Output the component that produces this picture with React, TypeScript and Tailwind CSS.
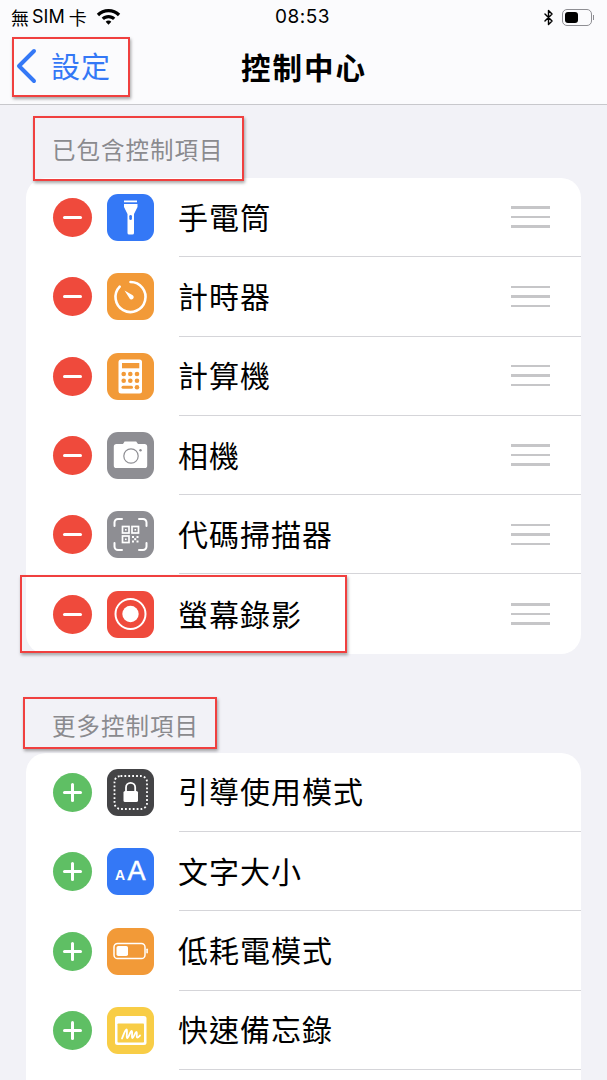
import { Bluetooth } from "lucide-react";
import type { ReactNode } from "react";

const cjk = "font-['Noto_Sans_CJK_TC','Noto_Sans_CJK_SC',sans-serif]";

function Tile({ color, children }: { color: string; children: ReactNode }) {
  return (
    <div className={`w-[47px] h-[47px] rounded-[11px] shrink-0 ${color}`}>
      <svg width="47" height="47" viewBox="0 0 47 47">
        {children}
      </svg>
    </div>
  );
}

const Flashlight = (
  <Tile color="bg-[#3478f6]">
    <rect x="17" y="6.5" width="13" height="1.8" fill="#fff" />
    <path d="M17 10h13.5v3l-3.5 7v19a1.6 1.6 0 0 1-1.6 1.6h-3.3a1.6 1.6 0 0 1-1.6-1.6V20l-3.5-7z" fill="#fff" />
    <rect x="22.3" y="21" width="2.6" height="5" rx="1.3" fill="#3478f6" />
  </Tile>
);

const Timer = (
  <Tile color="bg-[#f29a38]">
    <path d="M23.5 9a15 15 0 1 1-10.800 4.600" fill="none" stroke="#fff" strokeWidth="2.6" strokeLinecap="round" />
    <path d="M17.500 17.500l7.800 4.600a2.300 2.300 0 1 1-3 3z" fill="#fff" />
  </Tile>
);

const calcKeys = [
  [16.7, 21],
  [23.3, 21],
  [30, 21],
  [16.7, 27.7],
  [23.3, 27.7],
  [30, 27.7],
  [30, 34.3],
];

const Calculator = (
  <Tile color="bg-[#f29a38]">
    <rect x="11.5" y="6.5" width="23.5" height="34" rx="2.5" fill="#fff" />
    <rect x="15" y="10" width="17.300" height="5.300" fill="#f29a38" />
    {calcKeys.map(([cx, cy]) => (
      <circle key={`${cx}-${cy}`} cx={cx} cy={cy} r="2.3" fill="#f29a38" />
    ))}
    <rect x="14.500" y="32.800" width="11.500" height="3" rx="1.5" fill="#f29a38" />
  </Tile>
);

const Camera = (
  <Tile color="bg-[#8e8e93]">
    <path d="M9.5 12h6.5l1.6-2.6h11.6L31 12h6.5A2.7 2.7 0 0 1 40.2 14.7v18.7a2.7 2.7 0 0 1-2.7 2.7h-28a2.7 2.7 0 0 1-2.7-2.7V14.7A2.7 2.7 0 0 1 9.5 12z" fill="#fff" />
    <circle cx="24" cy="24" r="7.2" fill="none" stroke="#8e8e93" strokeWidth="1.2" />
    <circle cx="33.5" cy="18.3" r="1.2" fill="#8e8e93" />
  </Tile>
);

const QrScan = (
  <Tile color="bg-[#8e8e93]">
    <path d="M7.5 15v-3.5a3.5 3.5 0 0 1 3.5-3.5h4M32 8h4a3.5 3.5 0 0 1 3.5 3.5V15M39.5 32v3.5a3.5 3.5 0 0 1-3.5 3.5h-4M15 39h-4a3.5 3.5 0 0 1-3.5-3.5V32" fill="none" stroke="#fff" strokeWidth="2" strokeLinecap="round" />
    <g fill="none" stroke="#fff" strokeWidth="1.7">
      <rect x="15.5" y="15.5" width="6.5" height="6.5" />
      <rect x="25" y="15.5" width="6.5" height="6.5" />
      <rect x="15.5" y="25" width="6.5" height="6.5" />
    </g>
    <g fill="#fff">
      <rect x="18" y="18" width="1.6" height="1.6" />
      <rect x="27.5" y="18" width="1.6" height="1.6" />
      <rect x="18" y="27.5" width="1.6" height="1.6" />
      <rect x="25" y="25" width="2" height="2" />
      <rect x="29.5" y="25" width="2" height="2" />
      <rect x="27.2" y="27.2" width="2" height="2" />
      <rect x="25" y="29.5" width="2" height="2" />
      <rect x="29.5" y="29.5" width="2" height="2" />
    </g>
  </Tile>
);

const Record = (
  <Tile color="bg-[#ef4a3c]">
    <circle cx="23.5" cy="23" r="15" fill="none" stroke="#fff" strokeWidth="2" />
    <circle cx="23.5" cy="23" r="8.2" fill="#fff" />
  </Tile>
);

const GuidedAccess = (
  <Tile color="bg-[#444446]">
    <rect x="7.5" y="7" width="32.5" height="33" rx="6" fill="none" stroke="#fff" strokeWidth="1.8" strokeDasharray="1.8 2.1" />
    <path d="M19 22v-3.5a4.6 4.6 0 0 1 9.2 0V22" fill="none" stroke="#fff" strokeWidth="1.8" />
    <rect x="16.5" y="22" width="14.5" height="11" rx="1.6" fill="#fff" />
  </Tile>
);

const TextSize = (
  <Tile color="bg-[#3478f6]">
    <text x="8" y="32" fill="#fff" fontSize="14" fontWeight="700" fontFamily="Liberation Sans, sans-serif">A</text>
    <text x="20.500" y="32" fill="#fff" fontSize="27" fontWeight="400" stroke="#fff" strokeWidth="0.5" fontFamily="Liberation Sans, sans-serif">A</text>
  </Tile>
);

const LowPower = (
  <Tile color="bg-[#f29a38]">
    <rect x="7" y="15.5" width="31" height="15" rx="3.6" fill="none" stroke="#fff" strokeWidth="1.5" />
    <rect x="9.5" y="18" width="11.5" height="10" rx="1.8" fill="#fff" />
    <rect x="39.3" y="20.5" width="1.6" height="5" rx="0.8" fill="#fff" />
  </Tile>
);

const QuickNote = (
  <Tile color="bg-[#f8cd46]">
    <rect x="8" y="9" width="31.5" height="29" rx="2.5" fill="#fff" />
    <rect x="10.5" y="16.5" width="26.5" height="19" rx="0.8" fill="#f8cd46" />
    <path d="M15 31.500c1.500-3.500 3.200-9 4.500-9s-.6 8.500.8 8.500 3-7 4.300-7-.4 7 .9 7 2.500-6 3.800-6-.3 5.500 1 5.500 1.700-1 2.700-2" fill="none" stroke="#fff" strokeWidth="1.8" strokeLinecap="round" strokeLinejoin="round" />
  </Tile>
);

function Round({ add }: { add?: boolean }) {
  return (
    <div className={`relative w-[39px] h-[39px] rounded-full shrink-0 ${add ? "bg-[#5fbf64]" : "bg-[#ef4a3c]"}`}>
      <div className="absolute left-[10px] top-[18px] w-[19px] h-[3px] rounded-full bg-white" />
      {add && <div className="absolute left-[18px] top-[10px] w-[3px] h-[19px] rounded-full bg-white" />}
    </div>
  );
}

function Row({ icon, label, add, last }: { icon: ReactNode; label: string; add?: boolean; last?: boolean }) {
  return (
    <div className="h-[79.3px] flex items-center pl-[27px]">
      <Round add={add} />
      <div className="ml-[15px]">{icon}</div>
      <div className={`ml-[25px] flex-1 h-full flex items-center ${last ? "" : "border-b border-[#d5d5d9]"}`}>
        <span className={`${cjk} text-[30px] tracking-[1px] -ml-[1px] text-black leading-none mb-[3px]`}>{label}</span>
        {!add && (
          <div className="ml-auto mr-[31px] w-[39px] flex flex-col gap-[7px]">
            <div className="h-[2.5px] bg-[#c6c6c8]" />
            <div className="h-[2.5px] bg-[#c6c6c8]" />
            <div className="h-[2.5px] bg-[#c6c6c8]" />
          </div>
        )}
      </div>
    </div>
  );
}

function Mark({ className }: { className: string }) {
  return <div className={`absolute border-2 border-[#f0403f] shadow-[1px_2px_3px_rgba(0,0,0,0.35)] ${className}`} />;
}

export default function App() {
  return (
    <div className={`relative h-[1080px] overflow-hidden bg-[#f2f2f7] ${cjk}`}>
      {/* status bar + nav */}
      <div className="bg-[#fbfbfd] border-b border-[#c8c8cc] h-[105px]">
        <div className="h-[34px] flex items-center pl-[11px] pr-[13px] text-black">
          <span className="text-[18px] leading-none">無</span>
          <span className="text-[18px] leading-none ml-[3px] font-['Inter',sans-serif]">SIM</span>
          <span className="text-[18px] leading-none ml-[4px]">卡</span>
          <svg className="ml-[9px]" width="25" height="18" viewBox="0 0 25 18">
            <path d="M12.500 1C8 1 3.800 2.800.8 5.800l2.300 2.400C5.500 5.700 8.900 4.300 12.500 4.300s7 1.400 9.400 3.900l2.300-2.400C21.200 2.800 17 1 12.500 1z" fill="#000" />
            <path d="M12.500 6.900c-2.600 0-5 1-6.800 2.800L8 12.100c1.200-1.200 2.800-1.900 4.500-1.900s3.300.7 4.500 1.900l2.300-2.400c-1.800-1.800-4.200-2.800-6.800-2.800z" fill="#000" />
            <path d="M12.500 12.600c-1.100 0-2.100.4-2.800 1.200l2.800 3 2.800-3c-.7-.8-1.700-1.200-2.800-1.200z" fill="#000" />
          </svg>
          <span className="absolute left-[275px] top-[7px] text-[19px] leading-[20px] tracking-[0.5px] font-['Inter',sans-serif]">08:53</span>
          <Bluetooth className="ml-auto" size={17} strokeWidth={2} />
          <div className="ml-[5px] w-[30px] h-[17px] rounded-[5px] border border-[#8e8e93] p-[2px]">
            <div className="w-[13px] h-full rounded-[3px] bg-black" />
          </div>
          <div className="ml-[1px] w-[1.500px] h-[5px] bg-[#8e8e93]" />
        </div>
        <div className="relative h-[70px] flex items-center justify-center">
          <svg className="absolute left-[15px] top-[14px]" width="22" height="36" viewBox="0 0 22 36">
            <path d="M19 3L4 18l15 15" fill="none" stroke="#3478f6" strokeWidth="4" strokeLinecap="round" strokeLinejoin="round" />
          </svg>
          <span className="absolute left-[51px] top-[12px] text-[#3478f6] text-[29px] leading-[38px] tracking-[1px]">設定</span>
          <span className="text-[29.500px] font-bold leading-none text-black tracking-[2px] mb-[5px] ml-[1px]">控制中心</span>
        </div>
      </div>

      <div className="px-[26px]">
        <div className="h-[73px] flex items-end pb-[17px] pl-[26px]">
          <span className="text-[23.500px] leading-none tracking-[1px] text-[#8a8a8e]">已包含控制項目</span>
        </div>
        <div className="bg-white rounded-[20px] overflow-hidden">
          <Row icon={Flashlight} label="手電筒" />
          <Row icon={Timer} label="計時器" />
          <Row icon={Calculator} label="計算機" />
          <Row icon={Camera} label="相機" />
          <Row icon={QrScan} label="代碼掃描器" />
          <Row icon={Record} label="螢幕錄影" last />
        </div>

        <div className="h-[99px] flex items-end pb-[15px] pl-[26px]">
          <span className="text-[23.500px] leading-none tracking-[1px] text-[#8a8a8e]">更多控制項目</span>
        </div>
        <div className="bg-white rounded-t-[20px] overflow-hidden h-[400px]">
          <Row add icon={GuidedAccess} label="引導使用模式" />
          <Row add icon={TextSize} label="文字大小" />
          <Row add icon={LowPower} label="低耗電模式" />
          <Row add icon={QuickNote} label="快速備忘錄" />
        </div>
      </div>

      {/* red annotation boxes */}
      <Mark className="left-[12px] top-[37px] w-[118px] h-[60px]" />
      <Mark className="left-[33px] top-[116px] w-[211px] h-[65px]" />
      <Mark className="left-[20px] top-[575px] w-[327px] h-[78px]" />
      <Mark className="left-[23px] top-[697px] w-[194px] h-[52px]" />
    </div>
  );
}
